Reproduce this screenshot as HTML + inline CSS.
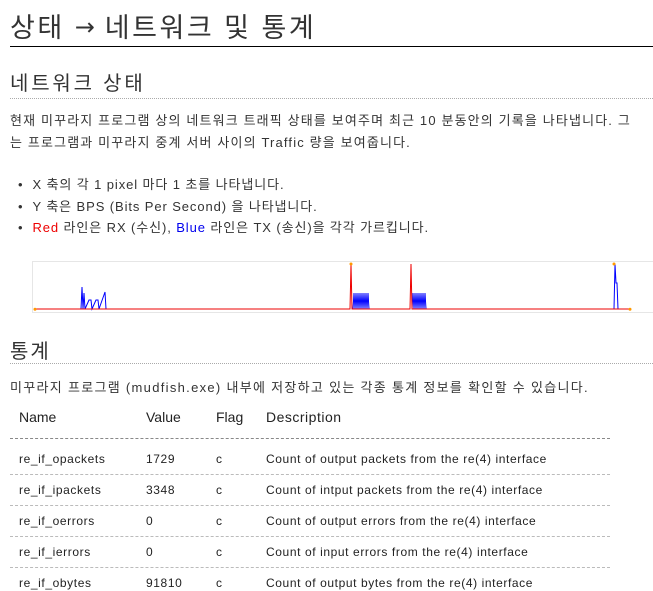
<!DOCTYPE html>
<html><head><meta charset="utf-8"><style>
body{margin:0;width:653px;height:591px;overflow:hidden;background:#fff;font-family:"Liberation Sans","Noto Sans CJK KR",sans-serif;color:#333;position:relative}
.a{position:absolute;white-space:nowrap}
.t{font-size:12px;color:#222;letter-spacing:0.6px}
.dl{position:absolute;left:10px;width:600px;border-top:1px dashed #bbb}
</style></head><body>
<div class="a" style="left:10px;top:6px;font-size:27px;color:#333;letter-spacing:2.5px">상태 <span style="font-family:'DejaVu Sans';font-size:24px;position:relative;top:-2px;letter-spacing:0">→</span> 네트워크 및 통계</div>
<div class="a" style="left:10px;top:46px;width:643px;border-top:1px solid #000"></div>
<div class="a" style="left:10px;top:67px;font-size:20px;color:#333;letter-spacing:2.8px">네트워크 상태</div>
<div class="a" style="left:10px;top:98px;width:643px;border-top:1px dotted #aaa"></div>
<div class="a" style="left:10px;top:110px;font-size:13px;line-height:22px;letter-spacing:1.15px">현재 미꾸라지 프로그램 상의 네트워크 트래픽 상태를 보여주며 최근 10 분동안의 기록을 나타냅니다. 그<br>는 프로그램과 미꾸라지 중계 서버 사이의 Traffic 량을 보여줍니다.</div>
<div class="a" style="left:18px;top:174px;font-size:13px;line-height:21.5px;letter-spacing:0.9px">• &nbsp;X 축의 각 1 pixel 마다 1 초를 나타냅니다.<br>• &nbsp;Y 축은 BPS (Bits Per Second) 을 나타냅니다.<br>• &nbsp;<span style="color:#e00">Red</span> 라인은 RX (수신), <span style="color:#00e">Blue</span> 라인은 TX (송신)을 각각 가르킵니다.</div>
<svg class="a" style="left:0;top:250px" width="653" height="70">
<rect x="32.5" y="11.5" width="640" height="51" fill="none" stroke="#e6e6e6"/>
<g transform="translate(0,-250)" fill="none" stroke-width="1">
<path d="M81 309L82 287L83 309L84 293L85 309L89 300L91 300L92 309L96 300L98 300L99 309L105 292L106 309" stroke="#00f"/>
<path d="M353 309L354 293L355 309L356 293L357 309L358 293L359 309L360 293L361 309L362 293L363 309L364 293L365 309L366 293L367 309L368 293L369 309" stroke="#00f"/>
<path d="M412 309L413 293L414 309L415 293L416 309L417 293L418 309L419 293L420 309L421 293L422 309L423 293L424 309L425 293L426 309" stroke="#00f"/>
<path d="M614 309L615 264L616 283L617 283L618 309" stroke="#00f"/>
<path d="M35 309L350 309L351 264L352 309L410 309L411 264L412 309L630 309" stroke="#e00"/>
</g>
<circle cx="35" cy="59.3" r="1.5" fill="#f90"/><circle cx="351" cy="14" r="1.5" fill="#f90"/><circle cx="614" cy="14" r="1.5" fill="#f90"/><circle cx="630" cy="59.3" r="1.5" fill="#f90"/>
</svg>
<div class="a" style="left:10px;top:335px;font-size:20px;letter-spacing:2px">통계</div>
<div class="a" style="left:10px;top:363px;width:643px;border-top:1px dotted #aaa"></div>
<div class="a" style="left:10px;top:377px;font-size:13px;letter-spacing:1.3px">미꾸라지 프로그램 (mudfish.exe) 내부에 저장하고 있는 각종 통계 정보를 확인할 수 있습니다.</div>
<div class="a" style="left:19px;top:409px;font-size:14px;color:#222">Name</div>
<div class="a" style="left:146px;top:409px;font-size:14px;color:#222">Value</div>
<div class="a" style="left:216px;top:409px;font-size:14px;color:#222">Flag</div>
<div class="a" style="left:266px;top:409px;font-size:14px;color:#222;letter-spacing:0.5px">Description</div>
<div class="dl" style="top:438px;border-top-color:#888"></div>
<div class="a t" style="left:19px;top:452px">re_if_opackets</div><div class="a t" style="left:146px;top:452px">1729</div><div class="a t" style="left:216px;top:452px">c</div><div class="a t" style="left:266px;top:452px">Count of output packets from the re(4) interface</div>
<div class="dl" style="top:474px"></div>
<div class="a t" style="left:19px;top:483px">re_if_ipackets</div><div class="a t" style="left:146px;top:483px">3348</div><div class="a t" style="left:216px;top:483px">c</div><div class="a t" style="left:266px;top:483px">Count of intput packets from the re(4) interface</div>
<div class="dl" style="top:505px"></div>
<div class="a t" style="left:19px;top:514px">re_if_oerrors</div><div class="a t" style="left:146px;top:514px">0</div><div class="a t" style="left:216px;top:514px">c</div><div class="a t" style="left:266px;top:514px">Count of output errors from the re(4) interface</div>
<div class="dl" style="top:536px"></div>
<div class="a t" style="left:19px;top:545px">re_if_ierrors</div><div class="a t" style="left:146px;top:545px">0</div><div class="a t" style="left:216px;top:545px">c</div><div class="a t" style="left:266px;top:545px">Count of input errors from the re(4) interface</div>
<div class="dl" style="top:567px"></div>
<div class="a t" style="left:19px;top:576px">re_if_obytes</div><div class="a t" style="left:146px;top:576px">91810</div><div class="a t" style="left:216px;top:576px">c</div><div class="a t" style="left:266px;top:576px">Count of output bytes from the re(4) interface</div>
</body></html>
